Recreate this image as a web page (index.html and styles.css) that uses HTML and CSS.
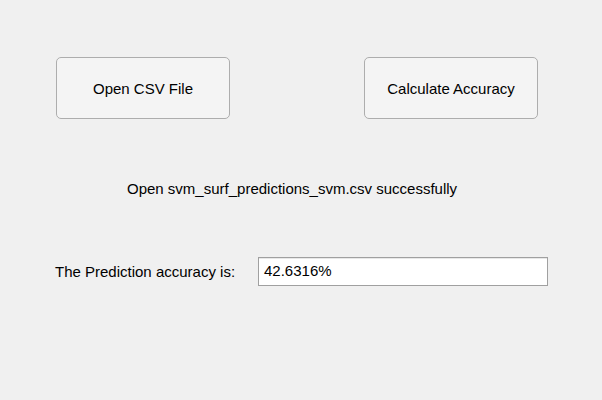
FILE: index.html
```html
<!DOCTYPE html>
<html>
<head>
<meta charset="utf-8">
<link rel="stylesheet" href="styles.css">
</head>
<body>
<div class="app">
  <div class="buttons">
    <button class="btn">Open CSV File</button>
    <button class="btn">Calculate Accuracy</button>
  </div>
  <div class="status">Open svm_surf_predictions_svm.csv successfully</div>
  <div class="result">
    <span class="label">The Prediction accuracy is:</span>
    <div class="field">42.6316%</div>
  </div>
</div>
</body>
</html>
```
FILE: styles.css
```css
html, body {
  margin: 0;
  padding: 0;
  background: #f0f0f0;
}
.app {
  width: 602px;
  height: 400px;
  font-family: "Liberation Sans", Arial, sans-serif;
  font-size: 15px;
  color: #000;
  display: flex;
  flex-direction: column;
}
.buttons {
  display: flex;
  gap: 134px;
  padding: 57px 0 0 56px;
}
.btn {
  width: 174px;
  height: 62px;
  background: #f4f4f4;
  border: 1px solid #adadad;
  border-radius: 5px;
  font-family: inherit;
  font-size: 15px;
  color: #000;
  padding: 0;
}
.status {
  padding: 61px 0 0 127px;
  line-height: 17px;
}
.result {
  display: flex;
  align-items: center;
  padding: 60px 0 0 55px;
}
.label {
  width: 203px;
  line-height: 17px;
}
.field {
  box-sizing: border-box;
  width: 290px;
  height: 29px;
  background: #fff;
  border: 1px solid #a0a0a0;
  box-shadow: inset 0 1px 0 #e8e8e8;
  padding: 4px 0 0 5px;
  line-height: 17px;
}
```
